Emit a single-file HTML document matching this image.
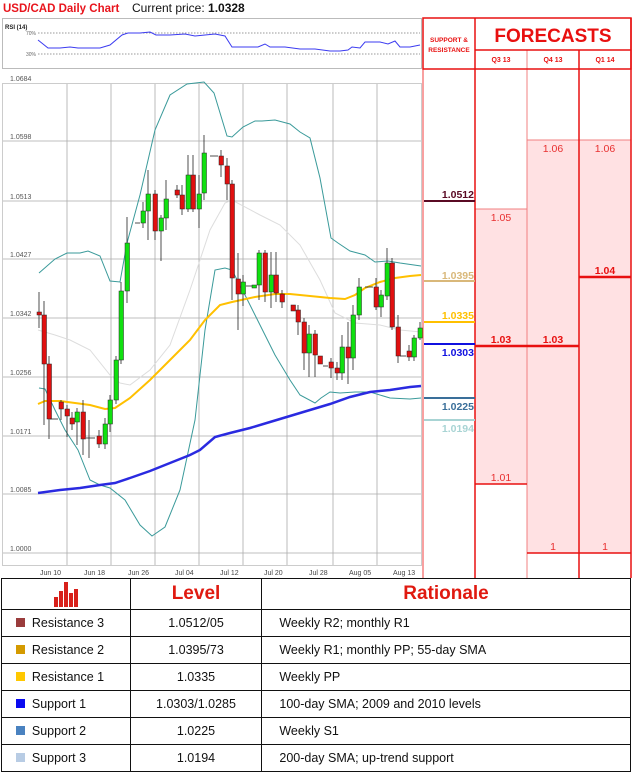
<!DOCTYPE html>
<html><head><meta charset="utf-8"><style>
body{margin:0;background:#fff;width:633px;height:774px;overflow:hidden;font-family:"Liberation Sans",sans-serif}
svg{position:absolute;left:0;top:0}
table{position:absolute;left:1px;top:578px;width:630px;border-collapse:collapse;font-size:12.5px;color:#111}
td{border:1.5px solid #111;height:26px;padding:0}
</style></head><body>
<svg width="633" height="578" viewBox="0 0 633 578" font-family="Liberation Sans, sans-serif">
<text x="3" y="12" font-size="11.5" font-weight="bold" fill="#e8141c">USD/CAD Daily Chart</text>
<text x="132" y="12" font-size="12" fill="#111">Current price: <tspan font-weight="bold">1.0328</tspan></text>
<!-- RSI -->
<rect x="2.5" y="18.5" width="419" height="50" fill="#fff" stroke="#bbb"/>
<text x="5" y="29" font-size="6" font-weight="bold" fill="#222">RSI (14)</text>
<text x="26" y="35" font-size="5" fill="#666">70%</text><text x="26" y="56" font-size="5" fill="#666">30%</text>
<line x1="38" y1="33" x2="420" y2="33" stroke="#777" stroke-dasharray="1.5,1.5" stroke-width=".7"/>
<line x1="38" y1="54" x2="420" y2="54" stroke="#777" stroke-dasharray="1.5,1.5" stroke-width=".7"/>
<polyline fill="none" stroke="#3b3bf0" stroke-width="1" points="38,40 48,48 60,48 70,47 78,48 88,48 100,48 110,45 122,35 128,33 140,33 150,32 156,35 170,35 185,34 195,36 205,35 215,34 225,36 232,47 240,47 258,47 265,44 270,47 285,47 300,49 315,49 330,51 340,51 348,50 352,47 360,48 365,42 380,42 388,44 395,41 400,47 410,47 415,46 420,45"/>
<!-- main chart -->
<text x="10" y="81" font-size="7" fill="#555">1.0684</text>
<rect x="2.5" y="83.5" width="419" height="482" fill="#fff" stroke="#ccc"/>
<g stroke="#aaa" stroke-width=".8">
<line x1="3" y1="141" x2="421" y2="141"/><line x1="3" y1="201" x2="421" y2="201"/><line x1="3" y1="259" x2="421" y2="259"/><line x1="3" y1="318" x2="421" y2="318"/><line x1="3" y1="377" x2="421" y2="377"/><line x1="3" y1="436" x2="421" y2="436"/><line x1="3" y1="494" x2="421" y2="494"/><line x1="3" y1="553" x2="421" y2="553"/>
<line x1="67" y1="84" x2="67" y2="565"/><line x1="111" y1="84" x2="111" y2="565"/><line x1="155" y1="84" x2="155" y2="565"/><line x1="199" y1="84" x2="199" y2="565"/><line x1="243" y1="84" x2="243" y2="565"/><line x1="287" y1="84" x2="287" y2="565"/><line x1="333" y1="84" x2="333" y2="565"/><line x1="377" y1="84" x2="377" y2="565"/>
</g>
<g font-size="7" fill="#555"><text x="10" y="139">1.0598</text><text x="10" y="199">1.0513</text><text x="10" y="257">1.0427</text><text x="10" y="316">1.0342</text><text x="10" y="375">1.0256</text><text x="10" y="434">1.0171</text><text x="10" y="492">1.0085</text><text x="10" y="551">1.0000</text></g>
<g font-size="7" fill="#444"><text x="40" y="575">Jun 10</text><text x="84" y="575">Jun 18</text><text x="128" y="575">Jun 26</text><text x="175" y="575">Jul 04</text><text x="220" y="575">Jul 12</text><text x="264" y="575">Jul 20</text><text x="309" y="575">Jul 28</text><text x="349" y="575">Aug 05</text><text x="393" y="575">Aug 13</text></g>
<polyline fill="none" stroke="#ddd" stroke-width="1" points="38,330 55,335 70,340 90,350 110,375 120,383 130,385 150,370 170,345 190,290 210,230 225,203 232,200 260,215 280,225 300,245 320,280 335,313 355,323 380,325 400,330 421,332"/>
<polyline fill="none" stroke="#3a9a9a" stroke-width="1" points="39,273 55,259 67,253 80,253 88,251 100,256 110,281 120,282 127,243 140,195 155,130 170,95 187,84 204,82 214,93 227,136 232,137 243,127 255,121 262,121 275,120 290,124 300,132 310,138 320,178 331,238 338,243 350,251 365,255 375,262 388,261 400,263 421,266"/>
<polyline fill="none" stroke="#3a9a9a" stroke-width="1" points="39,388 45,389 55,410 65,430 78,450 90,480 100,485 110,488 125,500 140,525 152,536 165,527 180,490 195,420 205,330 215,270 225,268 232,270 245,295 260,325 275,355 290,380 300,395 315,403 321,398 330,392 340,393 355,392 370,392 390,398 410,399 421,398"/>
<polyline fill="none" stroke="#ffc000" stroke-width="2" points="38,404 45,401 60,401 75,403 90,405 105,409 115,408 130,398 150,380 170,360 190,340 205,320 220,305 232,302 255,297 275,294 290,294 310,296 330,298 345,299 355,295 365,288 380,282 395,278 410,276 421,275"/>
<polyline fill="none" stroke="#2a2ae0" stroke-width="2.5" points="38,493 60,490 80,488 100,485 115,483 130,478 150,471 170,463 190,455 200,450 215,437 230,433 250,428 270,422 290,416 310,410 330,404 350,397 370,392 390,390 410,387 421,386"/>
<g stroke="#222" stroke-width=".8">
<line x1="39" y1="292" x2="39" y2="328"/><line x1="44" y1="301" x2="44" y2="425"/><line x1="49" y1="356" x2="49" y2="439"/><line x1="61" y1="400" x2="61" y2="420"/><line x1="67" y1="405" x2="67" y2="437"/><line x1="72" y1="412" x2="72" y2="430"/><line x1="77" y1="408" x2="77" y2="445"/><line x1="83" y1="400" x2="83" y2="455"/><line x1="89" y1="420" x2="89" y2="458"/><line x1="99" y1="430" x2="99" y2="448"/><line x1="105" y1="418" x2="105" y2="449"/><line x1="110" y1="395" x2="110" y2="432"/><line x1="116" y1="356" x2="116" y2="404"/><line x1="121" y1="282" x2="121" y2="364"/><line x1="127" y1="217" x2="127" y2="303"/><line x1="143" y1="202" x2="143" y2="228"/><line x1="148" y1="170" x2="148" y2="240"/><line x1="155" y1="190" x2="155" y2="240"/><line x1="161" y1="215" x2="161" y2="261"/><line x1="166" y1="180" x2="166" y2="230"/><line x1="177" y1="185" x2="177" y2="198"/><line x1="182" y1="185" x2="182" y2="215"/><line x1="188" y1="155" x2="188" y2="212"/><line x1="193" y1="155" x2="193" y2="212"/><line x1="199" y1="175" x2="199" y2="228"/><line x1="204" y1="135" x2="204" y2="200"/><line x1="221" y1="150" x2="221" y2="177"/><line x1="227" y1="158" x2="227" y2="200"/><line x1="232" y1="180" x2="232" y2="300"/><line x1="238" y1="253" x2="238" y2="330"/><line x1="243" y1="275" x2="243" y2="306"/><line x1="259" y1="250" x2="259" y2="300"/><line x1="265" y1="250" x2="265" y2="302"/><line x1="271" y1="252" x2="271" y2="308"/><line x1="276" y1="252" x2="276" y2="302"/><line x1="282" y1="290" x2="282" y2="308"/><line x1="298" y1="305" x2="298" y2="335"/><line x1="304" y1="318" x2="304" y2="370"/><line x1="309" y1="325" x2="309" y2="377"/><line x1="315" y1="330" x2="315" y2="377"/><line x1="331" y1="358" x2="331" y2="378"/><line x1="337" y1="362" x2="337" y2="380"/><line x1="342" y1="335" x2="342" y2="380"/><line x1="348" y1="322" x2="348" y2="384"/><line x1="353" y1="305" x2="353" y2="370"/><line x1="359" y1="278" x2="359" y2="320"/><line x1="376" y1="278" x2="376" y2="310"/><line x1="381" y1="290" x2="381" y2="317"/><line x1="387" y1="248" x2="387" y2="300"/><line x1="392" y1="258" x2="392" y2="330"/><line x1="398" y1="315" x2="398" y2="363"/><line x1="409" y1="345" x2="409" y2="361"/><line x1="414" y1="335" x2="414" y2="361"/><line x1="420" y1="322" x2="420" y2="340"/>
</g>
<g stroke="#222" stroke-width=".5">
<g fill="#e01010"><rect x="37" y="312" width="4.5" height="3"/><rect x="42" y="315" width="4.5" height="49"/><rect x="47" y="364" width="4.5" height="55"/><rect x="59" y="402" width="4.5" height="7"/><rect x="65" y="409" width="4.5" height="7"/><rect x="70" y="418" width="4.5" height="6"/><rect x="81" y="412" width="4.5" height="27"/><rect x="97" y="436" width="4.5" height="8"/><rect x="153" y="194" width="4.5" height="37"/><rect x="175" y="190" width="4.5" height="5"/><rect x="180" y="195" width="4.5" height="14"/><rect x="191" y="175" width="4.5" height="34"/><rect x="219" y="156" width="4.5" height="9"/><rect x="225" y="166" width="4.5" height="18"/><rect x="230" y="184" width="4.5" height="94"/><rect x="236" y="279" width="4.5" height="15"/><rect x="263" y="253" width="4.5" height="39"/><rect x="274" y="275" width="4.5" height="18"/><rect x="280" y="294" width="4.5" height="8"/><rect x="291" y="305" width="4.5" height="6"/><rect x="296" y="310" width="4.5" height="12"/><rect x="302" y="322" width="4.5" height="31"/><rect x="313" y="334" width="4.5" height="21"/><rect x="318" y="356" width="4.5" height="8"/><rect x="329" y="362" width="4.5" height="6"/><rect x="335" y="368" width="4.5" height="5"/><rect x="346" y="347" width="4.5" height="11"/><rect x="374" y="287" width="4.5" height="20"/><rect x="390" y="263" width="4.5" height="64"/><rect x="396" y="327" width="4.5" height="29"/><rect x="407" y="351" width="4.5" height="6"/></g>
<g fill="#10e010"><rect x="75" y="412" width="4.5" height="10"/><rect x="103" y="424" width="4.5" height="20"/><rect x="108" y="400" width="4.5" height="24"/><rect x="114" y="360" width="4.5" height="40"/><rect x="119" y="291" width="4.5" height="69"/><rect x="125" y="243" width="4.5" height="48"/><rect x="141" y="211" width="4.5" height="12"/><rect x="146" y="194" width="4.5" height="17"/><rect x="159" y="218" width="4.5" height="13"/><rect x="164" y="199" width="4.5" height="19"/><rect x="186" y="175" width="4.5" height="34"/><rect x="197" y="194" width="4.5" height="15"/><rect x="202" y="153" width="4.5" height="40"/><rect x="241" y="282" width="4.5" height="12"/><rect x="252" y="285" width="4.5" height="3"/><rect x="257" y="253" width="4.5" height="32"/><rect x="269" y="275" width="4.5" height="17"/><rect x="307" y="334" width="4.5" height="19"/><rect x="340" y="347" width="4.5" height="26"/><rect x="351" y="315" width="4.5" height="43"/><rect x="357" y="287" width="4.5" height="28"/><rect x="379" y="295" width="4.5" height="12"/><rect x="385" y="263" width="4.5" height="33"/><rect x="412" y="338" width="4.5" height="19"/><rect x="418" y="328" width="4.5" height="10"/></g>
</g>
<g stroke="#222" stroke-width=".8"><line x1="50" y1="419" x2="58" y2="419"/><line x1="86" y1="438" x2="95" y2="438"/><line x1="135" y1="223" x2="140" y2="223"/><line x1="210" y1="156" x2="218" y2="156"/><line x1="246" y1="286" x2="252" y2="286"/><line x1="323" y1="366" x2="328" y2="366"/><line x1="365" y1="287" x2="373" y2="287"/><line x1="400" y1="356" x2="406" y2="356"/></g>
<!-- forecast panel -->
<rect x="475" y="209" width="52" height="275" fill="#ffe1e3"/>
<rect x="527" y="140" width="104" height="413" fill="#ffe1e3"/>
<g stroke="#f04040" stroke-width="1"><line x1="423" y1="18" x2="423" y2="578"/><line x1="475" y1="209" x2="527" y2="209" stroke="#f08080"/><line x1="527" y1="140" x2="631" y2="140" stroke="#f08080"/><line x1="527" y1="50" x2="527" y2="578" stroke="#f08080"/></g>
<g stroke="#e81010" stroke-width="1.5" fill="none"><rect x="423" y="18" width="208" height="51"/><line x1="475" y1="18" x2="475" y2="578"/><line x1="579" y1="50" x2="579" y2="578"/><line x1="631" y1="18" x2="631" y2="578"/><line x1="475" y1="50" x2="631" y2="50"/><line x1="475" y1="484" x2="527" y2="484"/><line x1="527" y1="553" x2="631" y2="553"/></g>
<text x="553" y="42" text-anchor="middle" font-size="19" font-weight="bold" fill="#e81010">FORECASTS</text>
<text x="449" y="42" text-anchor="middle" font-size="6.5" font-weight="bold" fill="#e81010">SUPPORT &amp;</text>
<text x="449" y="52" text-anchor="middle" font-size="6.5" font-weight="bold" fill="#e81010">RESISTANCE</text>
<g font-size="7" font-weight="bold" fill="#e81010" text-anchor="middle"><text x="501" y="62">Q3 13</text><text x="553" y="62">Q4 13</text><text x="605" y="62">Q1 14</text></g>
<g font-size="10.5" fill="#e83030" text-anchor="middle"><text x="553" y="152">1.06</text><text x="605" y="152">1.06</text><text x="501" y="221">1.05</text><text x="501" y="481">1.01</text><text x="553" y="550">1</text><text x="605" y="550">1</text></g>
<g stroke="#e81010" stroke-width="2.5"><line x1="475" y1="346" x2="579" y2="346"/><line x1="579" y1="277" x2="631" y2="277"/></g>
<g font-size="10.5" font-weight="bold" fill="#e81010" text-anchor="middle"><text x="501" y="343">1.03</text><text x="553" y="343">1.03</text><text x="605" y="274">1.04</text></g>
<g stroke-width="2"><line x1="424" y1="201" x2="475" y2="201" stroke="#5a0a24"/><line x1="424" y1="281" x2="475" y2="281" stroke="#d9b87a"/><line x1="424" y1="322" x2="475" y2="322" stroke="#ffc000"/><line x1="424" y1="344" x2="475" y2="344" stroke="#1010e0"/><line x1="424" y1="398" x2="475" y2="398" stroke="#3a6f9a"/><line x1="424" y1="420" x2="475" y2="420" stroke="#a8d4d4"/></g>
<g font-size="10.5" font-weight="bold" text-anchor="end"><text x="474" y="198" fill="#5a0a24">1.0512</text><text x="474" y="279" fill="#d9b87a">1.0395</text><text x="474" y="319" fill="#ffc000">1.0335</text><text x="474" y="356" fill="#1010e0">1.0303</text><text x="474" y="410" fill="#3a6f9a">1.0225</text><text x="474" y="432" fill="#a8d4d4">1.0194</text></g>
</svg>
<table>
<tr style="height:31px"><td style="width:128px;text-align:center"><svg width="26" height="26" style="position:static;vertical-align:middle" viewBox="0 0 26 26"><g fill="#d8201a"><rect x="1" y="16" width="4" height="10"/><rect x="6" y="10" width="4" height="16"/><rect x="11" y="1" width="4" height="25"/><rect x="16" y="12" width="4" height="14"/><rect x="21" y="8" width="4" height="18"/></g></svg></td><td style="width:130px;text-align:center;font:bold 19px 'Liberation Sans',sans-serif;color:#e01a10">Level</td><td style="text-align:center;font:bold 19px 'Liberation Sans',sans-serif;color:#e01a10">Rationale</td></tr>
<tr><td>&nbsp;&nbsp;&nbsp;&nbsp;<span style="display:inline-block;width:9px;height:9px;background:#9a3c3c"></span>&nbsp; Resistance 3</td><td style="text-align:center">1.0512/05</td><td>&nbsp;&nbsp;&nbsp;&nbsp;&nbsp;Weekly R2; monthly R1</td></tr>
<tr><td>&nbsp;&nbsp;&nbsp;&nbsp;<span style="display:inline-block;width:9px;height:9px;background:#d49a00"></span>&nbsp; Resistance 2</td><td style="text-align:center">1.0395/73</td><td>&nbsp;&nbsp;&nbsp;&nbsp;&nbsp;Weekly R1; monthly PP; 55-day SMA</td></tr>
<tr><td>&nbsp;&nbsp;&nbsp;&nbsp;<span style="display:inline-block;width:9px;height:9px;background:#ffc800"></span>&nbsp; Resistance 1</td><td style="text-align:center">1.0335</td><td>&nbsp;&nbsp;&nbsp;&nbsp;&nbsp;Weekly PP</td></tr>
<tr><td>&nbsp;&nbsp;&nbsp;&nbsp;<span style="display:inline-block;width:9px;height:9px;background:#0a0af0"></span>&nbsp; Support 1</td><td style="text-align:center">1.0303/1.0285</td><td>&nbsp;&nbsp;&nbsp;&nbsp;&nbsp;100-day SMA; 2009 and 2010 levels</td></tr>
<tr><td>&nbsp;&nbsp;&nbsp;&nbsp;<span style="display:inline-block;width:9px;height:9px;background:#4a82c0"></span>&nbsp; Support 2</td><td style="text-align:center">1.0225</td><td>&nbsp;&nbsp;&nbsp;&nbsp;&nbsp;Weekly S1</td></tr>
<tr><td>&nbsp;&nbsp;&nbsp;&nbsp;<span style="display:inline-block;width:9px;height:9px;background:#b8cce4"></span>&nbsp; Support 3</td><td style="text-align:center">1.0194</td><td>&nbsp;&nbsp;&nbsp;&nbsp;&nbsp;200-day SMA; up-trend support</td></tr>
</table>
</body></html>
